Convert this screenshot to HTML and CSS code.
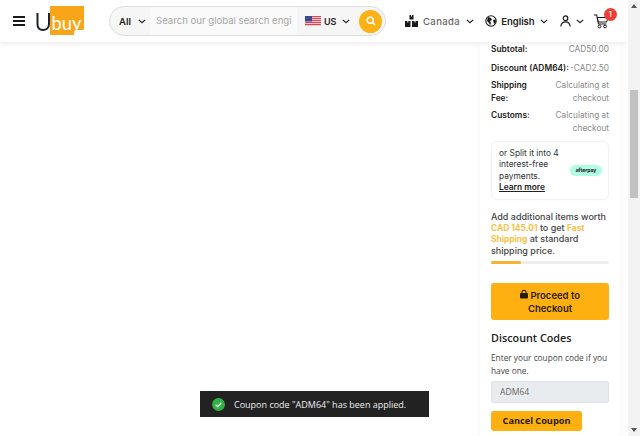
FILE: index.html
```html
<!DOCTYPE html>
<html lang="en">
<head>
    <meta charset="UTF-8">
    <meta name="viewport" content="width=device-width, initial-scale=1.0">
    <title>Ubuy Cart</title>
    <link rel="stylesheet" href="styles.css">
</head>
<body>
    <svg class="defs" width="0" height="0">
        <symbol id="chev" viewBox="0 0 10 6"><path d="M1 1l4 3.6L9 1" fill="none" stroke="currentColor" stroke-width="1.5"/></symbol>
    </svg>
    <div class="page">
        <div class="header">
            <svg class="burger" width="12" height="10" viewBox="0 0 12 10"><path d="M0 1h12M0 5h12M0 9h12" stroke="#1a1a1a" stroke-width="2"/></svg>
            <svg class="logo" width="49" height="30" viewBox="0 0 49 30">
                <path d="M14 0h34v23l-1 1h-6l-2 3-1-3v5H14z" fill="#f9a51a"/>
                <path d="M1.500 7v11c0 4 2.500 6 5.500 6s6-2 6-6V7" fill="none" stroke="#20232a" stroke-width="2"/>
                <text x="15.500" y="24" class="logo-text" textLength="30" lengthAdjust="spacingAndGlyphs">buy</text>
            </svg>
            <div class="search">
                <span class="search-cat">All <svg class="chev"><use href="#chev"/></svg></span>
                <span class="search-input">Search our global search engi</span>
                <span class="search-store">
                    <svg width="16" height="10" viewBox="0 0 16 10">
                        <rect width="16" height="10" fill="#d9485a"/>
                        <path d="M0 1.500h16M0 3.500h16M0 5.500h16M0 7.500h16M0 9.500h16" stroke="#f3e9ea" stroke-width=".8"/>
                        <rect width="7" height="5.500" fill="#3d4a8f"/>
                    </svg>
                    US <svg class="chev"><use href="#chev"/></svg>
                </span>
                <span class="search-btn">
                    <svg width="10" height="10" viewBox="0 0 10 10"><circle cx="4.200" cy="4.200" r="3" fill="none" stroke="#fff" stroke-width="1.500"/><path d="M6.500 6.500L9 9" stroke="#fff" stroke-width="1.600"/></svg>
                </span>
            </div>
            <div class="nav-item nav-canada">
                <svg width="13" height="12" viewBox="0 0 13 12"><path d="M4.500 0h4v4.500h-4zM0 6h5.500v6H0zM7 6h6v6H7z" fill="#1a1a1a"/><path d="M6 0h1v1.500H6zM2.300 6h1v1.500h-1zM9.500 6h1v1.500h-1z" fill="#fff"/></svg>
                <span class="nav-grey">Canada</span>
                <svg class="chev"><use href="#chev"/></svg>
            </div>
            <div class="nav-item nav-lang">
                <svg width="12" height="12" viewBox="0 0 12 12"><circle cx="6" cy="6" r="5.200" fill="none" stroke="#1a1a1a" stroke-width="1.100"/><path d="M3 2l3 1 1 2-2 1 1 2-1 2.500-1-2.500-2-2zM8 5l2.500-.5.500 2.500-2 2z" fill="#1a1a1a"/></svg>
                <span>English</span>
                <svg class="chev"><use href="#chev"/></svg>
            </div>
            <div class="nav-item nav-user">
                <svg width="11" height="12" viewBox="0 0 11 12"><circle cx="5.500" cy="3.200" r="2.300" fill="none" stroke="#1a1a1a" stroke-width="1.200"/><path d="M.8 11.500c.4-3 2.200-4.600 4.700-4.600s4.300 1.600 4.700 4.600" fill="none" stroke="#1a1a1a" stroke-width="1.200"/></svg>
                <svg class="chev"><use href="#chev"/></svg>
            </div>
            <div class="cart">
                <svg width="15" height="15" viewBox="0 0 15 15"><path d="M0 1h2.700l1.800 9h8" fill="none" stroke="#1a1a1a" stroke-width="1.100"/><path d="M3.200 3.500H14l-1.300 4.500H4.200z" fill="none" stroke="#1a1a1a" stroke-width="1"/><circle cx="5.500" cy="12.500" r="1.400" fill="none" stroke="#1a1a1a"/><circle cx="11" cy="12.500" r="1.400" fill="none" stroke="#1a1a1a"/></svg>
                <span class="cart-badge">1</span>
            </div>
        </div>

        <div class="main">
            <div class="summary">
                <div class="row row-first"><b>Subtotal:</b><span>CAD50.00</span></div>
                <div class="row row-second"><b>Discount (ADM64):</b><span>-CAD2.50</span></div>
                <div class="row row-wrap"><b>Shipping Fee:</b><span>Calculating at checkout</span></div>
                <div class="row row-wrap"><b>Customs:</b><span>Calculating at checkout</span></div>

                <div class="split">
                    <div class="split-text">or Split it into 4 interest-free payments. <a href="#">Learn more</a></div>
                    <span class="afterpay">afterpay</span>
                </div>

                <div class="fast">Add additional items worth <em>CAD 145.01</em> to get <em>Fast Shipping</em> at standard shipping price.</div>
                <div class="progress"><div class="progress-bar" style="width: 25%"></div></div>

                <a href="#" class="checkout">
                    <svg width="8" height="10" viewBox="0 0 9 10"><path d="M2.200 4.500V3a2.300 2.300 0 0 1 4.600 0v1.500" fill="none" stroke="#2a1c00" stroke-width="1.200"/><rect y="4" width="9" height="6" rx="1" fill="#2a1c00"/></svg>
                    Proceed to Checkout
                </a>

                <h3>Discount Codes</h3>
                <p class="coupon-hint">Enter your coupon code if you have one.</p>
                <div class="coupon-input">ADM64</div>
                <a href="#" class="cancel">Cancel Coupon</a>
            </div>
        </div>
    </div>
    <div class="scrollbar">
        <span class="arrow-up"></span>
        <div class="thumb"></div>
        <span class="arrow-down"></span>
    </div>

    <div class="toast">
        <svg width="13" height="13" viewBox="0 0 13 13"><circle cx="6.500" cy="6.500" r="6.500" fill="#2fb344"/><path d="M3.700 6.700l2 1.900 3.600-3.900" fill="none" stroke="#fff" stroke-width="1.300"/></svg>
        <span>Coupon code "ADM64" has been applied.</span>
    </div>
</body>
</html>
```

FILE: styles.css
```css
html, body {
    height: 100%;
    margin: 0;
    overflow: hidden;
}
body {
    display: flex;
    font-family: Inter, "Liberation Sans", sans-serif;
    background-color: #fff;
    color: #222;
}
.defs {
    position: absolute;
}
.page {
    width: 628px;
    height: 436px;
    overflow: hidden;
    background-color: #fff;
}

/* header */
.header {
    display: flex;
    align-items: center;
    height: 42px;
    background-color: #fff;
    box-shadow: 0 1px 6px rgba(0,0,0,0.1);
    position: relative;
    font-size: 9.5px;
    font-weight: 600;
}
.burger {
    margin-left: 13px;
}
.logo {
    margin-left: 11px;
}
.logo-text {
    font-family: Lato, sans-serif;
    font-size: 20px;
    font-weight: 400;
    fill: #fff;
}
.chev {
    width: 8px;
    height: 5px;
    color: #222;
}
.search {
    display: flex;
    align-items: center;
    width: 275px;
    height: 28px;
    margin-left: 24px;
    border: 1px solid #ddd;
    border-radius: 15px;
    background-color: #f6f6f6;
}
.search-cat {
    display: flex;
    align-items: center;
    gap: 7px;
    width: 31px;
    padding-left: 9px;
}
.search-input {
    width: 136px;
    height: 28px;
    line-height: 28px;
    padding: 0 5px 0 6px;
    background-color: #fafafa;
    color: #a5a5a5;
    font-weight: 400;
    font-size: 9.6px;
    white-space: nowrap;
    overflow: hidden;
}
.search-store {
    display: flex;
    align-items: center;
    gap: 3px;
    padding-left: 8px;
    width: 54px;
    font-size: 9px;
}
.search-store .chev {
    margin-left: 3px;
}
.search-btn {
    display: flex;
    align-items: center;
    justify-content: center;
    width: 23px;
    height: 23px;
    border-radius: 50%;
    background-color: #fcb116;
}
.nav-item {
    display: flex;
    align-items: center;
}
.nav-canada {
    margin-left: 19px;
    gap: 5px;
}
.nav-canada .chev {
    margin-left: 1px;
}
.nav-grey {
    color: #666;
    font-weight: 500;
    letter-spacing: .4px;
}
.nav-lang {
    margin-left: 11px;
    gap: 4px;
}
.nav-lang .chev {
    margin-left: 1px;
}
.nav-user {
    margin-left: 12px;
    gap: 5px;
}
.cart {
    position: relative;
    margin-left: 10px;
    height: 15px;
}
.cart-badge {
    position: absolute;
    top: -6px;
    left: 10px;
    width: 13px;
    height: 13px;
    line-height: 13px;
    border-radius: 50%;
    background-color: #ef3e36;
    color: #fff;
    font-size: 7px;
    text-align: center;
}

/* right summary column */
.main {
    background-color: #fff;
    padding-left: 480px;
}
.summary {
    width: 118px;
    height: 400px;
    padding: 0 11px;
    background-color: #fff;
    box-shadow: 0 0 8px rgba(0,0,0,0.05);
    font-size: 8.4px;
    line-height: 13px;
}
.row {
    display: flex;
    justify-content: space-between;
    margin-bottom: 5px;
}
.row-first {
    padding-top: 1px;
    margin-bottom: 6px;
}
.row-second {
    margin-bottom: 4px;
}
.row b {
    font-weight: 600;
    color: #222;
    white-space: nowrap;
}
.row span {
    font-size: 8.3px;
    color: #8b8b8b;
    text-align: right;
    white-space: nowrap;
}
.row-wrap {
    margin-bottom: 4px;
}
.row-wrap b {
    width: 48px;
    white-space: normal;
}
.row-wrap span {
    width: 65px;
    white-space: normal;
}
.split {
    display: flex;
    align-items: center;
    justify-content: space-between;
    height: 59px;
    box-sizing: border-box;
    margin-top: 6px;
    padding: 0 6px 0 7px;
    border: 1px solid #f2f2f2;
    border-radius: 6px;
    box-shadow: 0 0 3px rgba(0,0,0,0.03);
    font-size: 8.4px;
    line-height: 11.5px;
    color: #333;
}
.split-text {
    width: 62px;
}
.split-text a {
    color: #222;
    font-weight: 600;
}
.afterpay {
    width: 32px;
    height: 11px;
    line-height: 11px;
    border-radius: 6px;
    background-color: #b2fce4;
    color: #111;
    font-size: 5px;
    font-weight: 700;
    text-align: center;
}
.fast {
    margin-top: 11px;
    font-size: 9px;
    line-height: 11.2px;
    font-weight: 500;
    color: #444;
}
.fast em {
    font-style: normal;
    font-size: 8.4px;
    line-height: 1;
    font-weight: 700;
    color: #fbbf45;
}
.progress {
    height: 3px;
    margin-top: 5px;
    border-radius: 2px;
    background-color: #eee;
}
.progress-bar {
    height: 3px;
    border-radius: 2px;
    background-color: #f5b335;
}
.checkout {
    display: block;
    height: 37px;
    box-sizing: border-box;
    margin-top: 19px;
    padding: 6px 10px 0;
    border-radius: 3px;
    background-color: #fdb00f;
    color: #2a1c00;
    font-size: 9.5px;
    line-height: 13px;
    font-weight: 600;
    text-align: center;
    text-decoration: none;
}
h3 {
    margin: 11px 0 0;
    font-family: "Open Sans", sans-serif;
    font-size: 10.8px;
    line-height: 14px;
    font-weight: 600;
    color: #222;
}
.coupon-hint {
    margin: 6px 0 0;
    font-family: "Open Sans", sans-serif;
    font-size: 8.3px;
    color: #444;
}
.coupon-input {
    height: 22px;
    box-sizing: border-box;
    margin-top: 4px;
    padding-left: 8px;
    border: 1px solid #dfe3e6;
    border-radius: 2px;
    background-color: #e9ecef;
    font-family: "Open Sans", sans-serif;
    font-size: 8.6px;
    line-height: 20px;
    color: #666;
}
.cancel {
    display: block;
    width: 91px;
    height: 20px;
    margin-top: 8px;
    border-radius: 3px;
    background-color: #fdb00f;
    font-family: "Open Sans", sans-serif;
    font-size: 9.2px;
    line-height: 20px;
    font-weight: 700;
    color: #2a1c00;
    text-align: center;
    text-decoration: none;
}

/* fake browser scrollbar */
.scrollbar {
    position: relative;
    width: 12px;
    height: 436px;
    background-color: #f3f3f3;
}
.thumb {
    position: absolute;
    top: 90px;
    left: 2px;
    width: 8px;
    height: 108px;
    background-color: #c1c1c1;
}
.arrow-up, .arrow-down {
    position: absolute;
    left: 3px;
    border-left: 3px solid transparent;
    border-right: 3px solid transparent;
}
.arrow-up {
    top: 4px;
    border-bottom: 4px solid #555;
}
.arrow-down {
    bottom: 4px;
    border-top: 4px solid #555;
}

/* toast */
.toast {
    position: fixed;
    left: 200px;
    top: 391px;
    display: flex;
    align-items: center;
    gap: 9px;
    width: 229px;
    height: 26px;
    box-sizing: border-box;
    padding-left: 12px;
    background-color: #222;
    font-family: "Open Sans", sans-serif;
    font-size: 9px;
    color: #eee;
}
```
